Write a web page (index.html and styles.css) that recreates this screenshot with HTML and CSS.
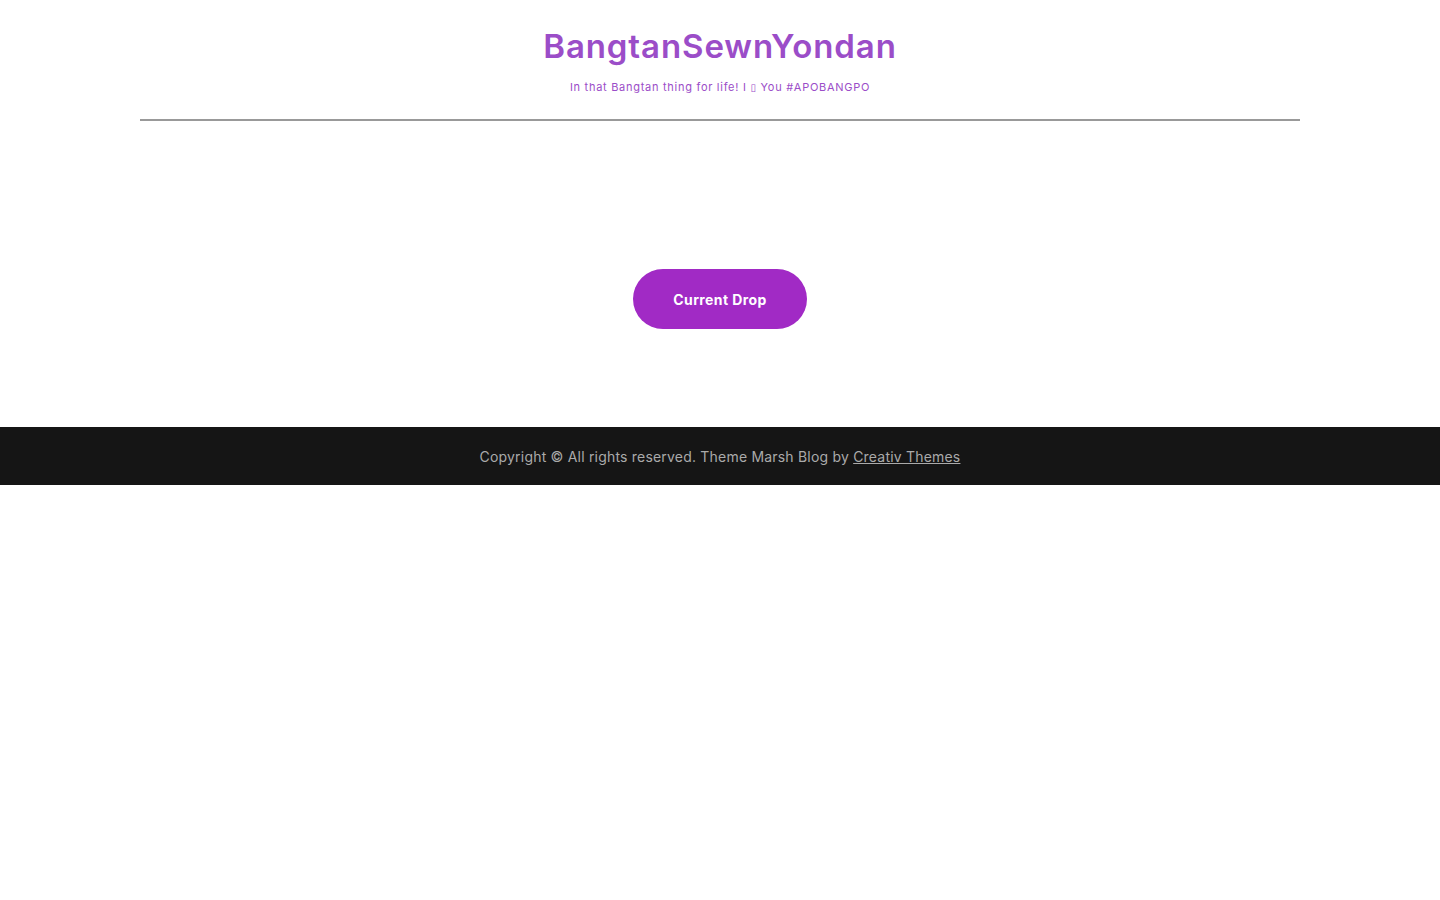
FILE: index.html
```html
<!DOCTYPE html>
<html lang="en">
<head>
<meta charset="utf-8">
<title>BangtanSewnYondan</title>
<link rel="stylesheet" href="styles.css">
</head>
<body>
<header class="site-header">
  <h1 class="site-title">BangtanSewnYondan</h1>
  <p class="site-tagline">In that Bangtan thing for life! I <span class="tofu">▯</span> You #APOBANGPO</p>
  <hr class="header-rule">
</header>
<main class="content">
  <a class="drop-button" href="#">Current Drop</a>
</main>
<footer class="site-footer">
  <p>Copyright © All rights reserved. Theme Marsh Blog by <a href="#">Creativ Themes</a></p>
</footer>
</body>
</html>
```
FILE: styles.css
```css
html, body {
  margin: 0;
  padding: 0;
  background: #ffffff;
}
body {
  font-family: "Inter", "Noto Sans", sans-serif;
}
.site-header {
  width: 1160px;
  margin: 0 auto;
  padding-top: 25px;
  text-align: center;
}
.site-title {
  margin: 0;
  font-size: 33px;
  line-height: 42px;
  font-weight: 600;
  color: #9b4dc8;
  letter-spacing: 0.9px;
}
.site-tagline {
  margin: 13px 0 0;
  font-size: 11px;
  line-height: 14px;
  color: #9b4dc8;
  letter-spacing: 0.72px;
}
.tofu {
  font-family: "DejaVu Sans", sans-serif;
  font-size: 10px;
}
.header-rule {
  margin: 24px 0 0;
  border: 0;
  height: 2px;
  background: #999999;
}
.content {
  height: 306px;
  display: flex;
  justify-content: center;
  padding-top: 148px;
  box-sizing: border-box;
}
.drop-button {
  display: flex;
  align-items: center;
  justify-content: center;
  width: 174px;
  height: 60px;
  border-radius: 30px;
  background: #a12ac5;
  color: #ffffff;
  font-size: 14px;
  font-weight: 700;
  text-decoration: none;
  letter-spacing: 0.4px;
}
.site-footer {
  background: #151515;
  height: 58px;
  display: flex;
  align-items: center;
  justify-content: center;
}
.site-footer p {
  margin: 0;
  font-size: 14px;
  color: #aaaaaa;
  letter-spacing: 0.2px;
}
.site-footer a {
  color: #aaaaaa;
  text-decoration: underline;
}
```
